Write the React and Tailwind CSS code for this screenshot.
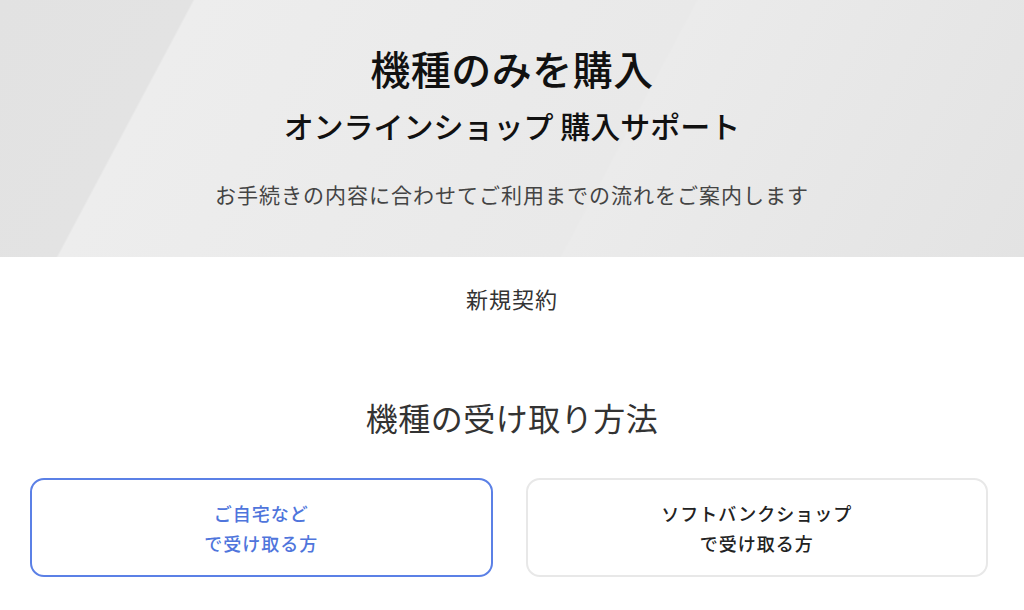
import React from 'react'

const jp = { fontFamily: '"Noto Sans CJK JP", "Noto Sans", sans-serif' }

function ReceiveCard({ lines, active }) {
  return (
    <button
      className={`flex-1 h-[99px] rounded-[14px] border-2 bg-white flex flex-col items-center justify-center text-[18px] leading-[30px] font-medium tracking-[1px] ${
        active ? 'border-[#5b80e6] text-[#4f75dc]' : 'border-[#e8e8e8] text-[#222222]'
      }`}
    >
      {lines.map((l) => (
        <span key={l}>{l}</span>
      ))}
    </button>
  )
}

export default function App() {
  return (
    <div className="w-[1024px] h-[610px] bg-white overflow-hidden" style={jp}>
      {/* Hero */}
      <div className="h-[257px] pt-[38px] flex flex-col items-center bg-[linear-gradient(118deg,#e2e2e2_0%,#e3e3e3_16.6%,#ededed_16.8%,#e9e9e9_60%,#ebebeb_60.2%,#e3e3e3_100%)]">
        <h1 className="text-[40px] leading-[60px] font-medium tracking-[0.5px] text-[#111111]">機種のみを購入</h1>
        <h2 className="mt-[5px] text-[30px] leading-[44px] font-medium text-[#111111]">オンラインショップ 購入サポート</h2>
        <p className="mt-[31px] text-[21px] leading-[32px] tracking-[1px] text-[#444444]">お手続きの内容に合わせてご利用までの流れをご案内します</p>
      </div>

      {/* Contract type */}
      <div className="mt-[25px] flex justify-center">
        <span className="text-[22px] leading-[32px] tracking-[1px] text-[#333333]">新規契約</span>
      </div>

      {/* Receive method */}
      <div className="mt-[79px] flex justify-center">
        <h3 className="text-[32px] leading-[48px] tracking-[0.5px] text-[#333333]">機種の受け取り方法</h3>
      </div>

      <div className="mt-[37px] pl-[30px] pr-[36px] flex gap-[33px]">
        <ReceiveCard lines={['ご自宅など', 'で受け取る方']} active />
        <ReceiveCard lines={['ソフトバンクショップ', 'で受け取る方']} />
      </div>
    </div>
  )
}
